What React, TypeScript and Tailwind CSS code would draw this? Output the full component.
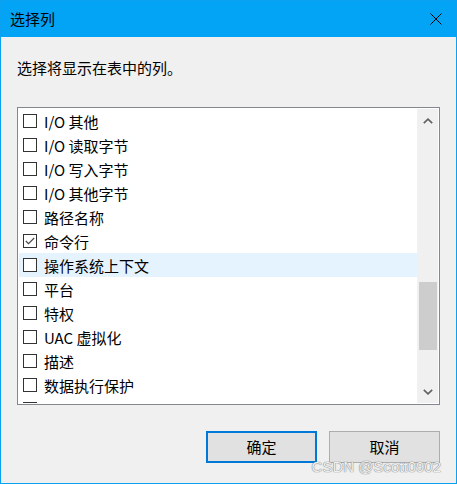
import React from 'react';

const rows = [
  { label: 'I/O 其他', checked: false },
  { label: 'I/O 读取字节', checked: false },
  { label: 'I/O 写入字节', checked: false },
  { label: 'I/O 其他字节', checked: false },
  { label: '路径名称', checked: false },
  { label: '命令行', checked: true },
  { label: '操作系统上下文', checked: false, hover: true },
  { label: '平台', checked: false },
  { label: '特权', checked: false },
  { label: 'UAC 虚拟化', checked: false },
  { label: '描述', checked: false },
  { label: '数据执行保护', checked: false },
  { label: '企业上下文', checked: false },
];

const font = "font-['Segoe_UI','Noto_Sans_CJK_SC','Noto_Sans',sans-serif]";

function CheckBox({ checked }: { checked: boolean }) {
  return (
    <div className="w-[14px] h-[14px] border border-[#333333] bg-white shrink-0 flex items-center justify-center">
      {checked && (
        <svg width="12" height="12" viewBox="0 0 12 12">
          <path d="M1.8 6 L4.5 8.7 L10.2 3" fill="none" stroke="#444" strokeWidth="1.1" />
        </svg>
      )}
    </div>
  );
}

export default function App() {
  return (
    <div className={`relative w-[457px] h-[484px] bg-[#f0f0f0] border border-[#0aa2f0] flex flex-col ${font}`}>
      <div className="h-[36px] bg-[#03a3f5] flex items-center justify-between pl-[9px] pr-[14px]">
        <span className="text-[15px] leading-[20px] text-black">选择列</span>
        <svg width="12" height="12" viewBox="0 0 12 12">
          <path d="M0.5 0.5 L11.5 11.5 M11.5 0.5 L0.5 11.5" stroke="#000" strokeWidth="1" />
        </svg>
      </div>

      <div className="px-[16px] flex flex-col">
        <div className="mt-[21px] text-[15px] leading-[20px] text-black">选择将显示在表中的列。</div>

        <div className="mt-[29px] h-[298px] border border-[#828790] bg-white p-[1px] flex">
          <div className="flex-1 overflow-hidden">
            {rows.map((r) => (
              <div
                key={r.label}
                className={`h-[24px] flex items-center pl-[4px] ${r.hover ? 'bg-[#e5f3ff]' : ''}`}
              >
                <CheckBox checked={r.checked} />
                <span className="ml-[7px] text-[15px] leading-[20px] text-black whitespace-nowrap pt-[2px]">{r.label}</span>
              </div>
            ))}
          </div>
          <div className="w-[21px] border-l border-[#eaf3fc] bg-[#f0f0f0] flex flex-col">
            <div className="h-[21px] flex items-center justify-center pt-[2px]">
              <svg width="10" height="6" viewBox="0 0 10 6">
                <path d="M0.8 5.2 L5 1.2 L9.2 5.2" fill="none" stroke="#606060" strokeWidth="1.6" />
              </svg>
            </div>
            <div className="flex-1 px-[1px]">
              <div className="mt-[152px] h-[68px] bg-[#cdcdcd]" />
            </div>
            <div className="h-[21px] flex items-center justify-center pb-[2px]">
              <svg width="10" height="6" viewBox="0 0 10 6">
                <path d="M0.8 0.8 L5 4.8 L9.2 0.8" fill="none" stroke="#606060" strokeWidth="1.6" />
              </svg>
            </div>
          </div>
        </div>

        <div className="mt-[26px] flex justify-end gap-[12px]">
          <button className="w-[111px] h-[32px] border-2 border-[#0078d7] bg-[#e1e1e1] text-[15px] text-black">确定</button>
          <button className="w-[111px] h-[32px] border border-[#adadad] bg-[#e1e1e1] text-[15px] text-black">取消</button>
        </div>
      </div>

      <div className="absolute right-[15px] bottom-[8px] font-['Liberation_Sans',sans-serif] text-[15px] leading-[16px] text-[#f0f0f0] [text-shadow:0_0_1px_#7a7a7a,0_0_1px_#7a7a7a]">
        CSDN @Scott0902
      </div>
    </div>
  );
}
